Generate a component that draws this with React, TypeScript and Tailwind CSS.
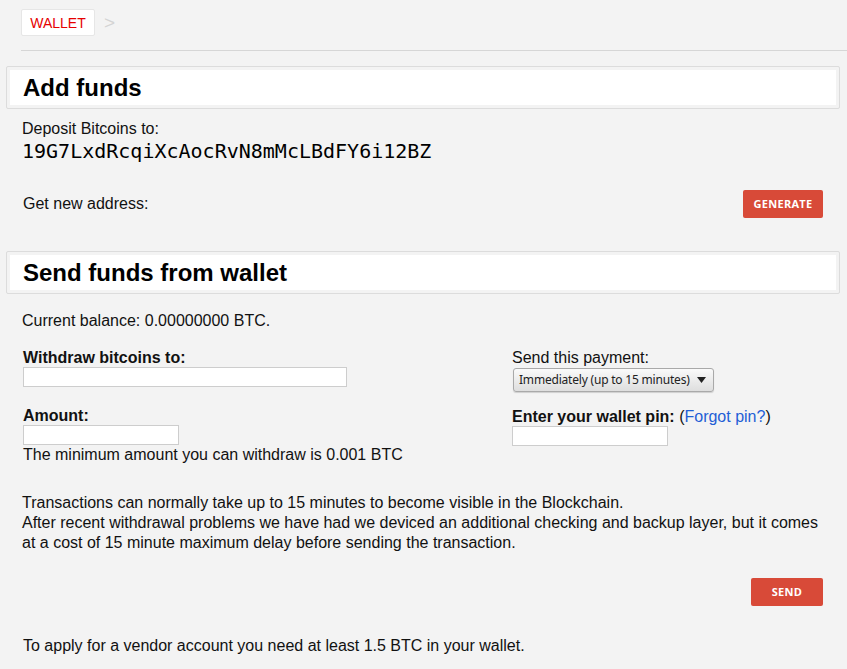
import React from "react";

const SectionHeader = ({ title }: { title: string }) => (
  <div className="ml-[6px] mr-[7px] rounded-[2px] border border-[#dcdcdc] p-[3px]">
    <div className="h-[35px] bg-white pl-[13px] text-[24px] font-bold leading-[35px] text-black">{title}</div>
  </div>
);

const RedButton = ({ label, width }: { label: string; width: string }) => (
  <button
    className={`h-[28px] ${width} rounded-[2px] bg-[#d84a38] font-['Open_Sans',sans-serif] text-[11px] font-bold tracking-[0.3px] text-white`}
  >
    {label}
  </button>
);

const TextInput = ({ width }: { width: string }) => (
  <input type="text" className={`block h-[20px] ${width} border border-[#cdcdcd] bg-white outline-none`} />
);

export default function App() {
  return (
    <div className="min-h-screen bg-[#f3f3f3] font-['Liberation_Sans',Arial,sans-serif] text-[16px] leading-[20px] text-[#111]">
      <div className="flex items-center pl-[21px] pt-[9px]">
        <div className="flex h-[27px] w-[74px] items-center justify-center rounded-[2px] border border-[#e6e6e6] bg-white text-[14px] text-[#e60000]">
          WALLET
        </div>
        <span className="ml-[9px] text-[19px] text-[#d4d4d4]">&gt;</span>
      </div>
      <div className="ml-[21px] mt-[14px] border-t border-[#d6d6d6]" />

      <div className="mt-[15px]">
        <SectionHeader title="Add funds" />
      </div>
      <div className="pl-[22px] pr-[24px]">
        <p className="mt-[10px]">Deposit Bitcoins to:</p>
        <p className="font-['DejaVu_Sans_Mono',monospace] text-[20px] leading-[24px] text-black">
          19G7LxdRcqiXcAocRvN8mMcLBdFY6i12BZ
        </p>
        <div className="mt-[27px] flex items-center justify-between pl-[1px]">
          <span>Get new address:</span>
          <RedButton label="GENERATE" width="w-[80px]" />
        </div>
      </div>

      <div className="mt-[33px]">
        <SectionHeader title="Send funds from wallet" />
      </div>
      <div className="pl-[22px] pr-[24px]">
        <p className="mt-[17px]">Current balance: 0.00000000 BTC.</p>

        <div className="mt-[18px] grid grid-cols-[489px_1fr] pl-[1px]">
          <div>
            <label className="block font-bold leading-[18px]">Withdraw bitcoins to:</label>
            <TextInput width="w-[324px]" />
            <label className="mt-[20px] block font-bold leading-[18px]">Amount:</label>
            <TextInput width="w-[156px]" />
            <p>The minimum amount you can withdraw is 0.001 BTC</p>
          </div>
          <div>
            <label className="block leading-[18px]">Send this payment:</label>
            <div className="ml-[1px] mt-[1px] flex h-[24px] w-[201px] items-center justify-between whitespace-nowrap rounded-[3px] border border-[#a9a9a9] bg-gradient-to-b from-[#fafafa] to-[#dedede] pl-[5px] pr-[7px] font-['Noto_Sans',sans-serif] text-[12px] tracking-[-0.2px] text-[#222] shadow-[0_1px_1px_rgba(0,0,0,0.15)]">
              <span>Immediately (up to 15 minutes)</span>
              <svg width="9" height="6" viewBox="0 0 9 6">
                <path d="M0 0h9L4.5 6z" fill="#222" />
              </svg>
            </div>
            <label className="mt-[16px] block leading-[18px]">
              <span className="font-bold">Enter your wallet pin:</span> (
              <a className="text-[#1f5fd6]">Forgot pin?</a>)
            </label>
            <TextInput width="w-[156px]" />
          </div>
        </div>

        <p className="mt-[28px]">
          Transactions can normally take up to 15 minutes to become visible in the Blockchain.
          <br />
          After recent withdrawal problems we have had we deviced an additional checking and backup layer, but it comes
          at a cost of 15 minute maximum delay before sending the transaction.
        </p>

        <div className="mt-[25px] flex justify-end">
          <RedButton label="SEND" width="w-[72px]" />
        </div>

        <p className="mt-[30px] pl-[1px]">To apply for a vendor account you need at least 1.5 BTC in your wallet.</p>
      </div>
    </div>
  );
}
